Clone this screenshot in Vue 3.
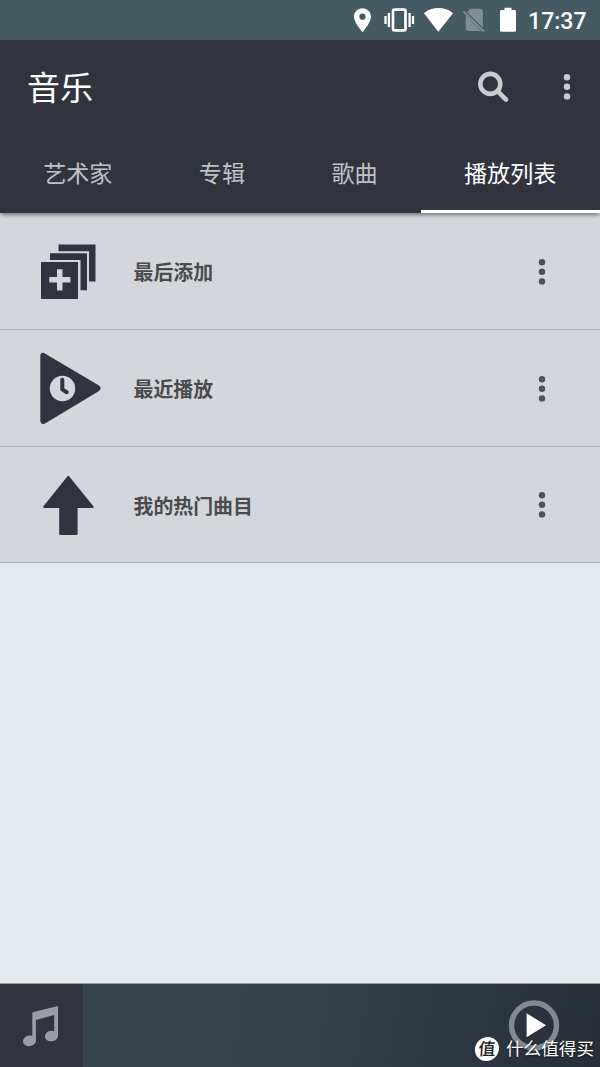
<template>
  <div class="screen">
    <div class="status-bar">
      <svg class="status-icons" width="180" height="40" viewBox="340 0 180 40">
        <path
          fill="#fff"
          fill-rule="evenodd"
          d="M362.5 8.3c-4.8 0-8.5 3.7-8.5 8.4 0 6.2 8.5 15.3 8.5 15.3s8.5-9.1 8.5-15.3c0-4.7-3.7-8.4-8.5-8.4zm0 5.3a3.1 3.1 0 1 1 0 6.2 3.1 3.1 0 0 1 0-6.2z"
        />
        <rect x="393" y="9.7" width="12.5" height="20.6" rx="1.5" fill="none" stroke="#fff" stroke-width="2.7" />
        <path d="M388.9 13v14M385.5 16v8M409.6 13v14M413 16v8" stroke="#fff" stroke-width="2.3" />
        <path fill="#fff" d="M424 13.2c8.3-6.8 20.7-6.8 29 0L438.3 31.7z" />
        <path fill="#7f8e94" d="M470.5 8.8h10c1.4 0 2.4 1 2.4 2.3V27.5L467 12.3zM465.8 15.2L481.5 31h-13.3c-1.4 0-2.4-1-2.4-2.3z" />
        <path stroke="#7f8e94" stroke-width="1.8" d="M463.5 11.5l20.5 20" />
        <path fill="#fff" d="M500 11.5c0-1 .6-1.6 1.5-1.6h3V7.7h7v2.2h3c.9 0 1.5.6 1.5 1.6V30.2c0 1-.6 1.6-1.5 1.6h-13c-.9 0-1.5-.6-1.5-1.6z" />
      </svg>
      <span class="time">17:37</span>
    </div>

    <header class="header">
      <div class="toolbar">
        <h1 class="title">音乐</h1>
        <svg class="search-icon" width="34" height="34" viewBox="0 0 34 34">
          <circle cx="14.3" cy="13.9" r="10" fill="none" stroke="#cacbce" stroke-width="4.6" />
          <path d="M22 21.6l8 8" stroke="#cacbce" stroke-width="4.7" stroke-linecap="round" />
        </svg>
        <svg class="more" width="8" height="28" viewBox="0 0 8 28">
          <circle v-for="y in dots" :key="y" cx="4" :cy="y" r="3.2" fill="#cacbce" />
        </svg>
      </div>
      <nav class="tabs">
        <button
          v-for="(tab, index) in tabs"
          :key="tab"
          class="tab"
          :class="{ active: index === activeTab }"
          @click="activeTab = index"
        >
          {{ tab }}
        </button>
      </nav>
    </header>

    <main class="playlists">
      <div v-for="item in playlists" :key="item.id" class="playlist">
        <div class="playlist-icon">
          <svg v-if="item.id === 'added'" width="68" height="76" viewBox="34 234 68 76" fill="#31343f">
            <path d="M58.5 244.5h37v37h-6.5v-30.3H58.5z" />
            <path d="M50 253.2h37v37h-6.5v-30.3H50z" />
            <path fill-rule="evenodd" d="M41 262h37v37H41zM57 269.3v7.7h-7.7v5.5H57v8h5.5v-8h7.9V277h-7.9v-7.7z" />
          </svg>
          <svg v-else-if="item.id === 'recent'" width="68" height="76" viewBox="34 351 68 76">
            <path
              fill="#31343f"
              d="M40.3 356c0-3 2.5-4 5-2.3L99 385.6c2.2 1.5 2.2 3.9 0 5.4L45.5 423.2c-2.7 1.7-5.2.5-5.2-2.6z"
            />
            <circle cx="62.5" cy="388.5" r="12.7" fill="#d3d6db" />
            <path
              d="M62.3 379.7v9.7l4.4 2.8"
              fill="none"
              stroke="#31343f"
              stroke-width="4"
              stroke-linecap="round"
              stroke-linejoin="round"
            />
          </svg>
          <svg v-else width="68" height="76" viewBox="34 467 68 76">
            <path
              fill="#31343f"
              stroke="#31343f"
              stroke-width="2"
              stroke-linejoin="round"
              d="M68.3 476.8L92.6 506.9H76.6V534H60.2V506.9H44.2z"
            />
          </svg>
        </div>
        <span class="playlist-name">{{ item.name }}</span>
        <svg class="more" width="8" height="28" viewBox="0 0 8 28">
          <circle v-for="y in dots" :key="y" cx="4" :cy="y" r="3.2" fill="#515155" />
        </svg>
      </div>
    </main>

    <footer class="player">
      <div class="cover">
        <svg width="84" height="83" viewBox="0 984 84 83" fill="#9c9da3">
          <path d="M32.3 1012.3L58 1006v30h-3.8v-21l-18.3 5V1041h-3.6z" />
          <ellipse cx="29.5" cy="1040.8" rx="6.6" ry="5.3" transform="rotate(-10 29.5 1040.8)" />
          <ellipse cx="51.5" cy="1036" rx="6.6" ry="5.3" transform="rotate(-10 51.5 1036)" />
        </svg>
      </div>
      <svg class="play" width="52" height="52" viewBox="0 0 52 52">
        <circle cx="26" cy="25.5" r="22.5" fill="none" stroke="#84898d" stroke-width="5.4" />
        <path d="M18.6 13.2v24L38 25.2z" fill="#fff" />
      </svg>
      <div class="watermark">
        <span class="badge">值</span>
        <span>什么值得买</span>
      </div>
    </footer>
  </div>
</template>

<script setup>
import { ref } from 'vue'

const dots = [4.2, 13.8, 23.4]

const tabs = ['艺术家', '专辑', '歌曲', '播放列表']
const activeTab = ref(3)

const playlists = [
  { id: 'added', name: '最后添加' },
  { id: 'recent', name: '最近播放' },
  { id: 'top', name: '我的热门曲目' }
]
</script>

<style>
body {
  margin: 0;
  overflow: hidden;
}
</style>

<style scoped>
.screen {
  width: 600px;
  height: 1067px;
  display: flex;
  flex-direction: column;
  overflow: hidden;
  background: #e4e9ed;
  font-family: Roboto, 'Noto Sans CJK SC', sans-serif;
}

svg {
  display: block;
  flex-shrink: 0;
}

/* Status bar */
.status-bar {
  height: 40px;
  flex-shrink: 0;
  display: flex;
  align-items: center;
  justify-content: flex-end;
  box-sizing: border-box;
  padding-right: 14px;
  background: #465a64;
}

.time {
  width: 58px;
  margin-left: 8px;
  padding-top: 3px;
  color: #fff;
  font-size: 23.1px;
  font-weight: 500;
  line-height: 39px;
  white-space: nowrap;
}

/* Header */
.header {
  height: 173px;
  flex-shrink: 0;
  display: flex;
  flex-direction: column;
  position: relative;
  background: #31343f;
  box-shadow: 0 3px 4px -1px rgba(0, 0, 0, 0.45);
}

.toolbar {
  height: 94px;
  display: flex;
  align-items: center;
  padding: 0 29.5px 0 27px;
}

.title {
  flex: 1;
  margin: 0;
  padding-top: 4px;
  color: #fff;
  font-size: 33px;
  font-weight: 400;
  line-height: 90px;
}

.search-icon {
  margin-right: 53px;
}

.tabs {
  flex: 1;
  display: flex;
}

.tab {
  padding: 0 43.2px;
  border: none;
  border-bottom: 3px solid transparent;
  background: none;
  color: #c1c2c5;
  font-family: inherit;
  font-size: 23.1px;
  white-space: nowrap;
  cursor: pointer;
}

.tab.active {
  flex: 1;
  padding-right: 0;
  border-bottom-color: #fff;
  color: #fff;
  text-align: left;
}

/* Playlists */
.playlists {
  flex: 1;
}

.playlist {
  height: 116.8px;
  display: flex;
  align-items: center;
  box-sizing: border-box;
  padding: 2px 54.5px 0 34px;
  border-bottom: 1px solid #abb0b6;
  background: #d3d6db;
}

.playlist-icon {
  width: 99.5px;
}

.playlist-name {
  flex: 1;
  color: #4b4a4c;
  font-size: 19.9px;
  font-weight: 700;
}

/* Player */
.player {
  height: 84px;
  flex-shrink: 0;
  display: flex;
  align-items: center;
  justify-content: space-between;
  position: relative;
  box-sizing: border-box;
  padding-right: 40px;
  border-top: 1px solid #929da4;
  background: linear-gradient(100deg, #37454e 0%, #35434c 45%, #2d3842 75%, #282f39 100%);
}

.cover {
  width: 83px;
  overflow: hidden;
  background: #31343f;
}

.watermark {
  position: absolute;
  right: 6px;
  bottom: 6px;
  display: flex;
  align-items: center;
  gap: 7px;
  color: #fff;
  font-size: 17.6px;
  line-height: 24px;
  text-shadow: 0 1px 2px rgba(0, 0, 0, 0.7);
}

.badge {
  width: 24px;
  height: 24px;
  border-radius: 50%;
  background: #fff;
  color: #222;
  font-size: 17px;
  font-weight: 500;
  text-align: center;
  text-shadow: none;
  transform: skewX(-4deg);
}
</style>
